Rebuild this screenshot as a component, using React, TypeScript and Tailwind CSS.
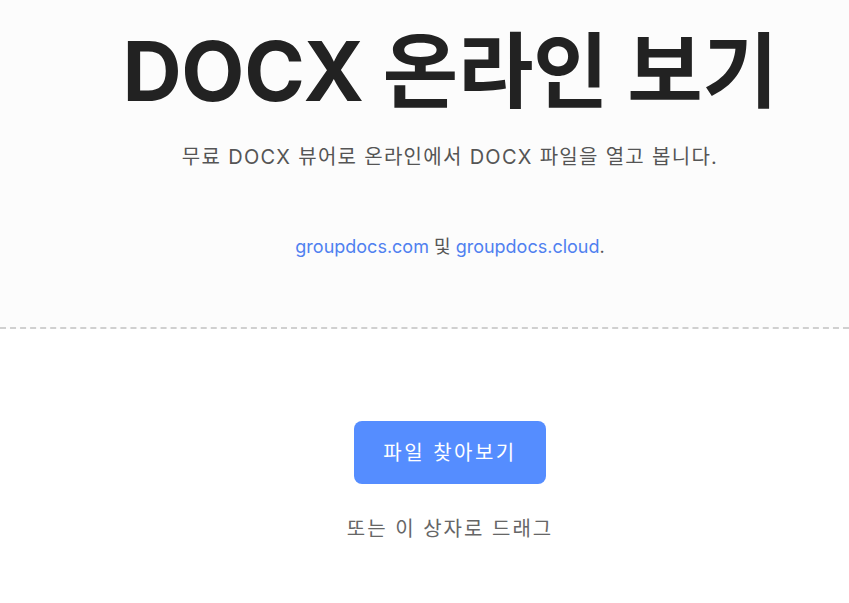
export default function App() {
  const font = { fontFamily: 'Inter, "Noto Sans CJK KR", sans-serif' };
  return (
    <div className="min-h-[603px] bg-white overflow-hidden" style={font}>
      <section className="bg-[#fcfcfc] border-b-2 border-dashed border-[#d0d0d0] flex flex-col items-center pl-[51px] pb-[68px]">
        <h1 className="mt-[24px] text-[82px] leading-[96px] font-bold text-[#222222] tracking-[-0.3px]">
          DOCX 온라인 보기
        </h1>
        <p className="mt-[24px] text-[20px] leading-[26px] text-[#555555] tracking-[1.3px]">
          무료 DOCX 뷰어로 온라인에서 DOCX 파일을 열고 봅니다.
        </p>
        <p className="mt-[65px] text-[18px] leading-[24px] text-[#555555]">
          <a className="text-[#4f80f0]">groupdocs.com</a> 및{' '}
          <a className="text-[#4f80f0]">groupdocs.cloud</a>.
        </p>
      </section>
      <div className="flex flex-col items-center pl-[51px]">
        <button
          type="button"
          className="mt-[92px] w-[192px] h-[63px] rounded-lg bg-[#558dff] text-white text-[20px] tracking-[2.5px]"
        >
          파일 찾아보기
        </button>
        <p className="mt-[31px] text-[20px] leading-[28px] text-[#666666] tracking-[2px]">또는 이 상자로 드래그</p>
      </div>
    </div>
  );
}
